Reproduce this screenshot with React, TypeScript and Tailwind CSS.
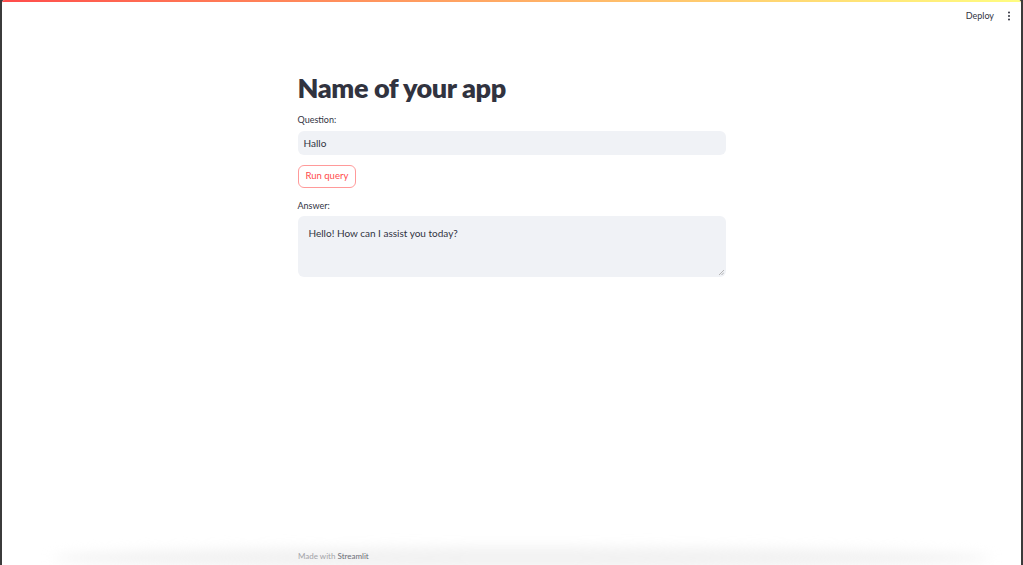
import React from "react";

export default function App() {
  return (
    <div className="h-[565px] w-[1023px] overflow-hidden bg-[#3b3b3b] p-0" style={{ fontFamily: "Lato, 'Noto Sans', sans-serif" }}>
      <div className="relative flex h-full flex-col ml-[2px] mr-[2px] rounded-t-[3px] bg-white overflow-hidden">
        <div className="h-[2px] w-full bg-gradient-to-r from-[#ff4b4b] to-[#fffd80]" />
        <div className="flex h-[28px] items-center justify-end pr-[10px]">
          <span className="text-[9px] text-[#31333f] mr-[13px]">Deploy</span>
          <svg width="4" height="10" viewBox="0 0 4 10">
            <circle cx="2" cy="1.5" r="1" fill="#31333f" />
            <circle cx="2" cy="5" r="1" fill="#31333f" />
            <circle cx="2" cy="8.5" r="1" fill="#31333f" />
          </svg>
        </div>
        <div className="flex flex-1 justify-center">
          <div className="ml-[0px] w-[428px] pt-[40px]">
            <h1 className="text-[27px] font-extrabold leading-[36px] text-[#31333f] tracking-[-0.4px]">Name of your app</h1>
            <div className="mt-[8px] text-[9px] leading-[12px] text-[#31333f]">Question:</div>
            <div className="mt-[5px] flex h-[24px] items-center rounded-[6px] bg-[#f0f2f6] px-[6px] text-[10px] text-[#31333f]">Hallo</div>
            <button className="mt-[10px] flex h-[23px] items-center rounded-[6px] border border-[#ff9a9a] bg-white px-[7px] text-[9.5px] text-[#ff4b4b]">Run query</button>
            <div className="mt-[12px] text-[9px] leading-[12px] text-[#31333f]">Answer:</div>
            <div className="relative mt-[4px] h-[61px] rounded-[6px] bg-[#f0f2f6] px-[11px] pt-[10px] text-[10px] text-[#31333f]">
              Hello! How can I assist you today?
              <svg className="absolute bottom-[2px] right-[2px]" width="6" height="6" viewBox="0 0 6 6">
                <line x1="1" y1="6" x2="6" y2="1" stroke="#999" strokeWidth="0.7" />
                <line x1="3.5" y1="6" x2="6" y2="3.5" stroke="#999" strokeWidth="0.7" />
              </svg>
            </div>
          </div>
        </div>
        <div className="relative h-[22px]">
          <div className="absolute left-[50px] right-[30px] top-[4px] h-[22px] rounded-[50%] bg-[#f2f2f2] blur-[6px]" />
          <div className="relative ml-[296px] mt-[7px] text-[8px] text-[#a3a3a8]">
            Made with <span className="text-[#6b6d76]">Streamlit</span>
          </div>
        </div>
      </div>
    </div>
  );
}
